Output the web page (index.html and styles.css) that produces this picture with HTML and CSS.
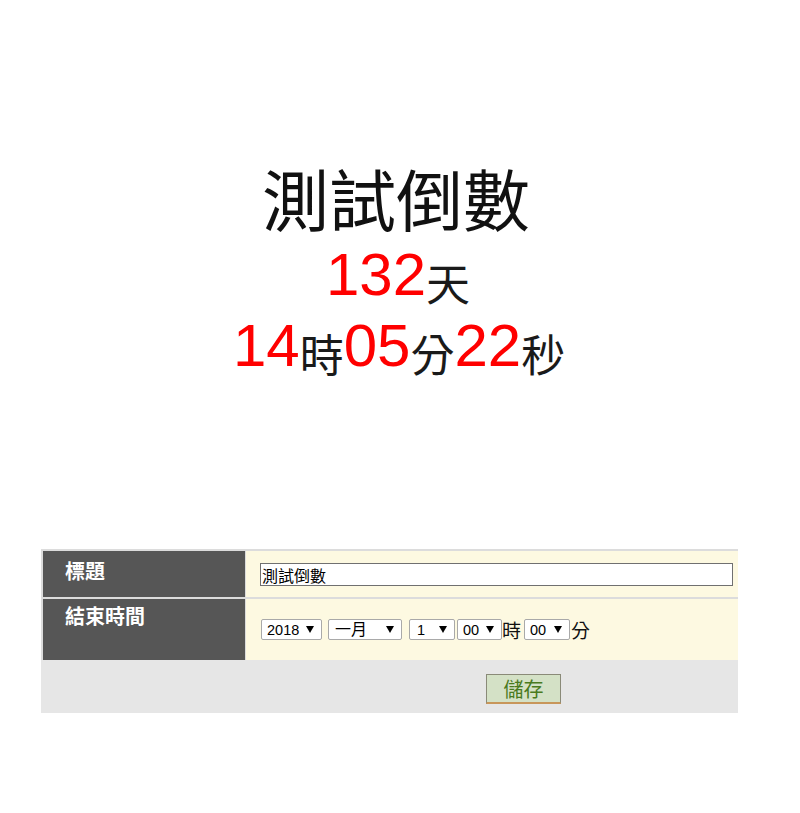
FILE: index.html
```html
<!DOCTYPE html>
<html lang="zh-Hant">
<head>
<meta charset="utf-8">
<title>測試倒數</title>
<link rel="stylesheet" href="styles.css">
</head>
<body>
<div class="countdown">
  <h1 class="title">測試倒數</h1>
  <div class="line days"><span class="num">132</span><span class="unit">天</span></div>
  <div class="line time"><span class="num">14</span><span class="unit">時</span><span class="num">05</span><span class="unit">分</span><span class="num">22</span><span class="unit">秒</span></div>
</div>

<form class="form">
  <div class="row row-title">
    <div class="label label-title">標題</div>
    <div class="value value-title"><input class="text-input" type="text" value="測試倒數"></div>
  </div>
  <div class="row row-end">
    <div class="label label-end">結束時間</div>
    <div class="value value-end">
      <span class="select sel-year"><select><option>2018</option></select></span>
      <span class="select sel-month"><select><option>一月</option></select></span>
      <span class="select sel-day"><select><option>1</option></select></span>
      <span class="select sel-hour"><select><option>00</option></select></span>
      <span class="suffix suffix-hour">時</span>
      <span class="select sel-min"><select><option>00</option></select></span>
      <span class="suffix suffix-min">分</span>
    </div>
  </div>
  <div class="footer">
    <button class="save" type="button">儲存</button>
  </div>
</form>
</body>
</html>
```
FILE: styles.css
```css
html, body {
  margin: 0;
  padding: 0;
  background: #ffffff;
}

body {
  font-family: "Liberation Sans", "Noto Sans CJK TC", sans-serif;
  color: #000;
}

.countdown {
  padding-top: 163px;
  text-align: center;
}

.title {
  margin: 0;
  padding-right: 8px;
  font-family: "Noto Sans CJK TC", sans-serif;
  font-size: 67px;
  font-weight: 400;
  line-height: 68px;
  color: #111;
}

.line {
  font-size: 60px;
  line-height: 71px;
  white-space: nowrap;
}

.days {
  margin-top: 8px;
  padding-right: 4px;
}

.time {
  padding-right: 2px;
}

.num {
  color: #ff0000;
  font-family: "Liberation Sans", sans-serif;
}

.unit {
  font-family: "Noto Sans CJK TC", sans-serif;
  font-size: 44px;
  font-weight: 400;
  line-height: 40px;
  vertical-align: -6px;
  color: #1a1a1a;
}

/* form table */
.form {
  margin: 168px 0 0 41px;
  width: 697px;
  background: #dcdcdc;
  padding-top: 2px;
}

.row {
  display: flex;
  margin-left: 2px;
}

.row + .row {
  margin-top: 2px;
}

.row-title { height: 46px; }
.row-end { height: 61px; }

.label {
  width: 202px;
  flex: none;
  box-sizing: border-box;
  padding-left: 22px;
  background: #565656;
  color: #ffffff;
  font-family: "Noto Sans CJK TC", sans-serif;
  font-size: 20px;
  font-weight: bold;
  line-height: 24px;
}

.label-title { padding-top: 8px; }
.label-end { padding-top: 5px; }

.value {
  flex: 1;
  margin-left: 1px;
  background: #fdf9e1;
  box-sizing: border-box;
}

.value-title {
  padding: 12px 4px 0 14px;
}

.text-input {
  display: block;
  box-sizing: border-box;
  width: 473px;
  height: 23px;
  margin: 0;
  padding: 0 1px;
  border: 1px solid #707070;
  background: #ffffff;
  font-family: "Noto Sans CJK TC", sans-serif;
  font-size: 16px;
  color: #000;
  outline: none;
}

.value-end {
  display: flex;
  align-items: center;
  padding-left: 15px;
}

.select {
  position: relative;
  display: block;
  height: 21px;
  flex: none;
}

.select select {
  appearance: none;
  -webkit-appearance: none;
  display: block;
  box-sizing: border-box;
  width: 100%;
  height: 21px;
  margin: 0;
  padding: 0 0 0 5px;
  border: 1px solid #a9a9a9;
  border-radius: 2px;
  background: #ffffff;
  font-family: "Liberation Sans", "Noto Sans CJK TC", sans-serif;
  font-size: 14.5px;
  color: #000;
  outline: none;
}

.select::after {
  content: "";
  position: absolute;
  right: 8px;
  top: 7px;
  width: 0;
  height: 0;
  border-left: 4px solid transparent;
  border-right: 4px solid transparent;
  border-top: 7px solid #000;
  pointer-events: none;
}

.sel-year { width: 61px; }
.sel-month { width: 74px; margin-left: 6px; }
.sel-month select { font-size: 16px; padding-left: 6px; }
.sel-day { width: 46px; margin-left: 7px; }
.sel-day select { padding-left: 7px; }
.sel-hour { width: 45px; margin-left: 2px; }
.sel-min { width: 46px; margin-left: 3px; }

.suffix {
  font-family: "Noto Sans CJK TC", sans-serif;
  font-size: 19px;
  line-height: 21px;
  color: #111;
}

.suffix-min { margin-left: 1px; }

.footer {
  height: 53px;
  background: #e6e6e6;
  box-sizing: border-box;
  padding: 14px 0 0 445px;
}

.save {
  display: block;
  box-sizing: border-box;
  width: 75px;
  height: 30px;
  margin: 0;
  padding: 0;
  background: #d4e1c6;
  border: 1px solid #8a8a78;
  border-bottom: 2px solid #c8965a;
  color: #4a7a1e;
  font-family: "Noto Sans CJK TC", sans-serif;
  font-size: 20px;
  line-height: 26px;
}
```
